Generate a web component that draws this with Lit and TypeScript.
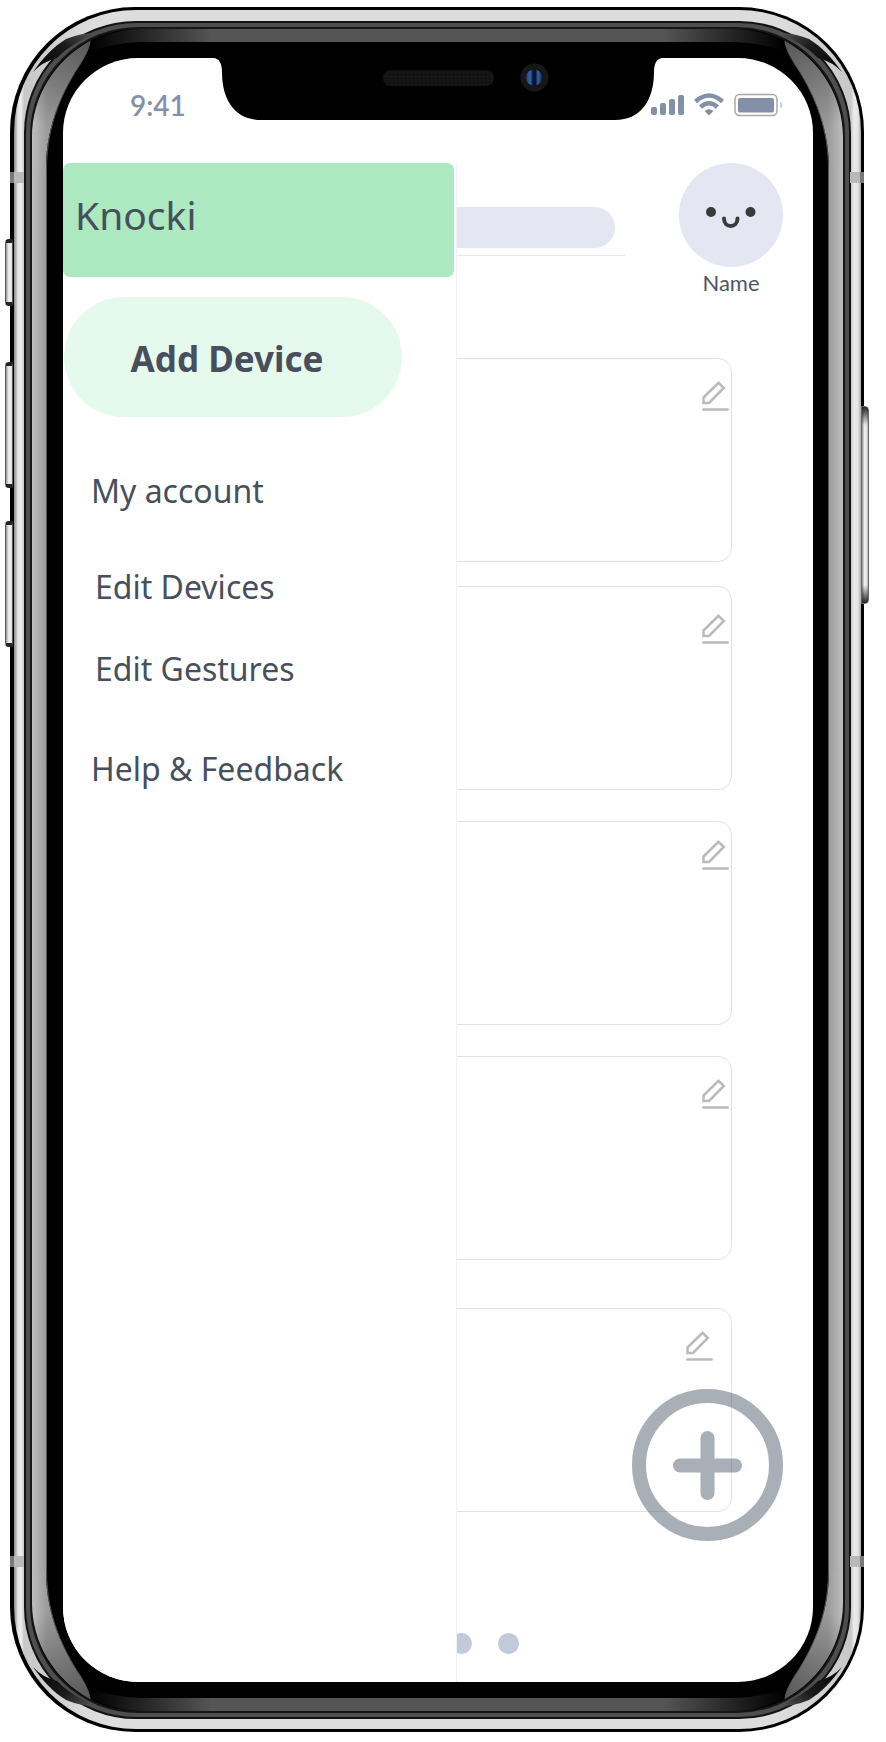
import { LitElement, html, css, svg } from "lit";
import { customElement } from "lit/decorators.js";

interface Device {
  id: number;
  layout: string;
}

const DEVICES: Device[] = [
  { id: 1, layout: "" },
  { id: 2, layout: "low" },
  { id: 3, layout: "high" },
  { id: 4, layout: "" },
  { id: 5, layout: "inset" },
];

/** Metal frame, bezel and notch; the screen goes in the slot. */
@customElement("phone-frame")
export class PhoneFrame extends LitElement {
  static styles = css`
    :host {
      display: block;
    }
    .shell {
      position: relative;
      padding: 3px 3px 3px 4px;
      border-radius: 125px;
      background: #000;
    }
    .steel {
      position: relative;
      padding: 11px 10px 10px;
      border-radius: 122px;
      background: linear-gradient(90deg, #8a8a8a, #e4e4e4 4px, #f0f0f0 7px, #c8c8c8 10px, #ddd 80px, #ddd calc(100% - 80px), #c8c8c8 calc(100% - 10px), #ececec calc(100% - 7px), #e4e4e4 calc(100% - 3px), #aaa);
    }
    .rim {
      padding: 4px;
      border: 2px solid #121212;
      border-radius: 112px;
      background: #4e4e4e;
    }
    .band {
      position: relative;
      padding: 29px 30px 29px 31px;
      border: 2px solid #161616;
      border-radius: 108px;
      background: #000;
    }
    .side {
      position: absolute;
      top: 139px;
      bottom: 139px;
      left: 0;
      width: 15px;
      background: linear-gradient(90deg, #bdbdbd, #9c9c9c 14px, #555 14px);
    }
    .side.right {
      left: auto;
      right: 0;
      transform: scaleX(-1);
    }
    .edge {
      position: absolute;
      left: 180px;
      right: 180px;
      top: 0;
      height: 13px;
      background: #555;
    }
    .edge.bottom {
      top: auto;
      bottom: 0;
    }
    .corner {
      position: absolute;
      top: 0;
      left: 0;
      display: block;
    }
    .corner.tr,
    .corner.br {
      left: auto;
      right: 0;
    }
    .corner.bl,
    .corner.br {
      top: auto;
      bottom: 0;
    }
    .corner.tr {
      transform: scaleX(-1);
    }
    .corner.bl {
      transform: scaleY(-1);
    }
    .corner.br {
      transform: scale(-1);
    }
    .antenna {
      position: absolute;
      left: 0;
      width: 14px;
      height: 11px;
      background: #b8b9bb;
      box-shadow: inset 4px 0 #77787a;
    }
    .antenna.top {
      top: 165px;
    }
    .antenna.bottom {
      bottom: 165px;
    }
    .antenna.right {
      left: auto;
      right: 0;
      box-shadow: inset -4px 0 #77787a;
    }
    .key {
      position: absolute;
      left: -5px;
      width: 8px;
      box-sizing: border-box;
      border: 1px solid #555;
      border-width: 4px 1px;
      border-top-color: #222;
      border-bottom-color: #222;
      border-radius: 4px 0 0 4px;
      background: linear-gradient(90deg, #999, #f4f4f4 50%, #ddd);
    }
    .mute {
      top: 232px;
      height: 67px;
    }
    .up {
      top: 355px;
      height: 126px;
    }
    .down {
      top: 514px;
      height: 126px;
    }
    .power {
      left: auto;
      right: -5px;
      top: 399px;
      height: 198px;
      border: 1px solid #666;
      border-radius: 0 4px 4px 0;
      background: linear-gradient(#222, #fff0 18px, #fff0 calc(100% - 18px), #222), linear-gradient(90deg, #888, #f0f0f0 40%, #e4e4e4 80%, #aaa);
    }
    .screen {
      position: relative;
      overflow: hidden;
      border-radius: 75px;
      background: #fff;
    }
    .notch {
      position: absolute;
      top: 0;
      left: calc(50% - 225px);
      display: block;
    }
  `;

  private corner(name: string) {
    return html`<svg class="corner ${name}" width="180" height="140" viewBox="0 0 180 140" aria-hidden="true">
      <defs>
        <linearGradient id="s" gradientUnits="userSpaceOnUse" x1="0" y1="0" x2="15" y2="0">
          <stop offset="0" stop-color="#bdbdbd" />
          <stop offset="1" stop-color="#9c9c9c" />
        </linearGradient>
        <linearGradient id="d" gradientUnits="userSpaceOnUse" x1="14" y1="100" x2="58" y2="12">
          <stop offset="0" stop-color="#000" stop-opacity="0" />
          <stop offset="1" stop-color="#000" stop-opacity=".45" />
        </linearGradient>
        <linearGradient id="t" gradientUnits="userSpaceOnUse" x1="58" y1="0" x2="180" y2="0">
          <stop offset="0" stop-color="#000" />
          <stop offset=".4" stop-color="#222" />
          <stop offset="1" stop-color="#555" />
        </linearGradient>
      </defs>
      <path d="M0 140V108C0 68 22 32 58 12C58 18 52 30 45 40C34 58 14 92 14 140Z" fill="url(#s)" />
      <path d="M0 140V108C0 68 22 32 58 12C58 18 52 30 45 40C34 58 14 92 14 140Z" fill="url(#d)" />
      <path d="M58 12C58 18 52 30 45 40C34 58 14.500 92 14.500 140" fill="none" stroke="#555" stroke-width="1" />
      <path d="M60 20Q58 12 70 8Q88 0 110 0H180V13H108Q82 14 60 22Z" fill="url(#t)" />
    </svg>`;
  }

  private glint(name: string) {
    return html`<svg class="corner ${name}" width="100" height="80" viewBox="0 0 100 80" aria-hidden="true">
      <defs>
        <linearGradient id="g" x1="0" y1="1" x2="1" y2="0">
          <stop offset="0" stop-color="#000" />
          <stop offset=".6" stop-color="#1c1c1c" />
          <stop offset="1" stop-color="#555" />
        </linearGradient>
      </defs>
      <path d="M19 62C29 48 39 37 52 29Q66 23 82 23C62 32 52 39 43 48Q28 52 19 62Z" fill="url(#g)" />
    </svg>`;
  }

  render() {
    const corners = ["tl", "tr", "bl", "br"];
    return html`
      <div class="shell">
        <i class="key mute"></i><i class="key up"></i><i class="key down"></i><i class="key power"></i>
        <div class="steel">
          ${corners.map((c) => this.glint(c))}
          <div class="rim">
            <div class="band">
              <i class="side"></i><i class="side right"></i>
              <i class="edge"></i><i class="edge bottom"></i>
              ${corners.map((c) => this.corner(c))}
              <div class="screen">
                <slot></slot>
                <svg class="notch" width="450" height="62" viewBox="0 0 450 62" aria-hidden="true">
                  <defs>
                    <pattern id="mesh" width="4" height="4" patternUnits="userSpaceOnUse">
                      <rect width="4" height="4" fill="#161617" />
                      <rect width="1" height="4" fill="#111112" />
                      <rect width="4" height="1" fill="#111112" />
                    </pattern>
                    <linearGradient id="lens">
                      <stop offset="0" stop-color="#1d3a66" />
                      <stop offset=".25" stop-color="#3566ab" />
                      <stop offset=".45" stop-color="#0a1430" />
                      <stop offset=".6" stop-color="#0a1430" />
                      <stop offset=".75" stop-color="#3566ab" />
                      <stop offset="1" stop-color="#14284a" />
                    </linearGradient>
                  </defs>
                  <path d="M0 0C7 0 9 7 9 14C9 42 22 62 48 62H402C428 62 441 42 441 14C441 7 443 0 450 0Z" />
                  <rect x="170" y="12" width="111" height="16" rx="8" fill="url(#mesh)" />
                  <circle cx="321.500" cy="19.500" r="14" fill="#171718" />
                  <circle cx="321" cy="19.500" r="8" fill="url(#lens)" />
                </svg>
              </div>
            </div>
          </div>
        </div>
        <i class="antenna top"></i><i class="antenna bottom"></i>
        <i class="antenna top right"></i><i class="antenna bottom right"></i>
      </div>
    `;
  }
}

@customElement("status-bar")
export class StatusBar extends LitElement {
  static styles = css`
    :host {
      display: flex;
      justify-content: space-between;
      align-items: center;
      height: 24px;
      padding: 35px 30px 46px 67px;
      color: #8490a8;
      font: 600 28px/24px Lato, sans-serif;
    }
    .icons {
      display: flex;
      align-items: center;
      gap: 10px;
    }
    svg {
      display: block;
    }
  `;

  render() {
    return html`
      <time>9:41</time>
      <div class="icons">
        <svg width="33" height="24" viewBox="0 0 33 24" fill="#8490a8" role="img" aria-label="Signal">
          <rect x="0" y="14" width="6" height="8" rx="2" />
          <rect x="9" y="10" width="6" height="12" rx="2" />
          <rect x="18" y="6" width="6" height="16" rx="2" />
          <rect x="27" y="2" width="6" height="20" rx="2" />
        </svg>
        <svg width="30" height="24" viewBox="0 0 30 24" role="img" aria-label="Wi-Fi">
          <path d="M1.500 8.500Q15-3.500 28.500 8.500M6.500 14Q15 6.500 23.500 14" fill="none" stroke="#8490a8" stroke-width="4.500" />
          <path d="M10.500 18Q15 14.500 19.500 18L15 22.500Z" fill="#8490a8" />
        </svg>
        <svg width="49" height="24" viewBox="0 0 49 24" role="img" aria-label="Battery">
          <rect x="1" y="1.500" width="42" height="21" rx="4.500" fill="none" stroke="#a9a9a9" stroke-width="1.500" />
          <rect x="4" y="5" width="36" height="14.500" rx="2" fill="#8490a8" />
          <path d="M46 8.500Q48.500 9.500 48.500 12T46 15.500Z" fill="#ccd0da" />
        </svg>
      </div>
    `;
  }
}

@customElement("app-drawer")
export class AppDrawer extends LitElement {
  static styles = css`
    :host {
      display: block;
      box-sizing: border-box;
      border-right: 1px solid #f1f2f6;
      background: #fff;
      color: #474f5c;
      font-family: "Noto Sans", sans-serif;
    }
    .brand {
      margin: 0 2px 0 0;
      padding: 24px 12px 34px;
      border-radius: 7px;
      background: #ace8c0;
      font-size: 39px;
      font-weight: 400;
      line-height: 56px;
    }
    .add {
      display: block;
      width: 338px;
      height: 120px;
      margin: 20px 0 0 1px;
      padding: 4px 12px 0 0;
      border: 0;
      border-radius: 60px;
      background: #e6f9ed;
      color: inherit;
      font: 700 35px/40px "Noto Sans", sans-serif;
    }
    ul {
      margin: 0;
      padding: 0;
      list-style: none;
    }
    .menu {
      display: grid;
      gap: 56px;
      padding: 54px 0 0 28px;
    }
    .sub {
      display: grid;
      gap: 42px;
      padding: 0 0 4px 4px;
    }
    a {
      display: block;
      color: inherit;
      font-size: 32px;
      line-height: 40px;
      text-decoration: none;
    }
  `;

  render() {
    return html`
      <h1 class="brand">Knocki</h1>
      <button class="add" type="button">Add Device</button>
      <nav>
        <ul class="menu">
          <li><a href="#account">My account</a></li>
          <li>
            <ul class="sub">
              <li><a href="#devices">Edit Devices</a></li>
              <li><a href="#gestures">Edit Gestures</a></li>
            </ul>
          </li>
          <li><a href="#help">Help &amp; Feedback</a></li>
        </ul>
      </nav>
    `;
  }
}

@customElement("device-list")
export class DeviceList extends LitElement {
  static styles = css`
    :host {
      display: block;
      padding: 60px 81px 0 39px;
    }
    .card {
      display: flex;
      justify-content: flex-end;
      align-items: flex-start;
      box-sizing: border-box;
      height: 204px;
      margin-bottom: 31px;
      padding: 22px 2px 0;
      border: 1px solid #e1e1ea;
      border-radius: 14px;
    }
    .card:first-child {
      margin-bottom: 24px;
    }
    .card:nth-child(4) {
      margin-bottom: 48px;
    }
    .card:last-child {
      margin-bottom: 0;
    }
    .low {
      padding-top: 27px;
    }
    .high {
      padding-top: 18px;
    }
    .inset {
      padding-right: 18px;
    }
    .edit {
      padding: 0;
      border: 0;
      background: none;
    }
    svg {
      display: block;
    }
  `;

  render() {
    return DEVICES.map(
      (d) => html`<article class="card ${d.layout}">
        <button class="edit" type="button" aria-label="Edit device ${d.id}">
          <svg width="27" height="30" viewBox="0 0 27 30" fill="none" stroke="#bababa" stroke-width="2.500">
            ${svg`<path d="M1.500 16.500L16.500 1.800L21.800 7L7 22H1.500Z" /><path d="M1.300 28.500H25.700" stroke-linecap="round" />`}
          </svg>
        </button>
      </article>`,
    );
  }
}

@customElement("app-root")
export class AppRoot extends LitElement {
  static styles = css`
    :host {
      display: block;
      padding: 7px 22px 10px 10px;
      background: #fff;
    }
    .body {
      position: relative;
    }
    .top {
      display: flex;
      gap: 54px;
      padding: 0 30px 0 39px;
    }
    .search {
      flex: 1;
      height: 48px;
      margin-top: 44px;
      padding-right: 10px;
      border-bottom: 1px solid #e8e8f0;
    }
    .search input {
      display: block;
      box-sizing: border-box;
      width: 100%;
      height: 41px;
      padding: 0 20px;
      border: 0;
      border-radius: 21px;
      background: #e4e7f1;
      font: 20px Lato, sans-serif;
    }
    .user {
      margin: 0;
      color: #4d5664;
      font: 22px/30px Lato, sans-serif;
      text-align: center;
    }
    .user svg {
      display: block;
    }
    .user figcaption {
      padding-top: 1px;
    }
    .dots {
      display: flex;
      justify-content: center;
      gap: 26px;
      padding: 121px 0 28px;
    }
    .dot {
      width: 21px;
      height: 21px;
      border-radius: 50%;
      background: #c1cad8;
    }
    .fab {
      position: absolute;
      right: 30px;
      bottom: 141px;
      padding: 0;
      border: 0;
      background: none;
    }
    .fab svg {
      display: block;
    }
    .drawer {
      position: absolute;
      top: 0;
      bottom: 0;
      left: 0;
      width: 394px;
    }
  `;

  render() {
    return html`
      <phone-frame>
        <status-bar></status-bar>
        <div class="body">
          <header class="top">
            <div class="search"><input type="search" aria-label="Search" /></div>
            <figure class="user">
              <svg width="104" height="104" viewBox="0 0 104 104" aria-hidden="true">
                <circle cx="52" cy="52" r="52" fill="#e4e7f1" />
                <circle cx="32" cy="49" r="5" fill="#3a3a3c" />
                <circle cx="71.500" cy="49" r="5" fill="#3a3a3c" />
                <path d="M45 55.500C45 65.500 58.500 65.500 58.500 55.500" fill="none" stroke="#3a3a3c" stroke-width="4" stroke-linecap="round" />
              </svg>
              <figcaption>Name</figcaption>
            </figure>
          </header>
          <main>
            <device-list></device-list>
            <div class="dots"><i class="dot"></i><i class="dot"></i><i class="dot"></i><i class="dot"></i></div>
          </main>
          <button class="fab" type="button" aria-label="Add">
            <svg width="151" height="152" viewBox="0 0 151 152" fill="none" opacity=".5" stroke="#536171" stroke-width="14" stroke-linecap="round">
              <ellipse cx="75.500" cy="76" rx="68.500" ry="69" />
              <path d="M75.500 49V104M48 76.500H103" />
            </svg>
          </button>
          <app-drawer class="drawer"></app-drawer>
        </div>
      </phone-frame>
    `;
  }
}
